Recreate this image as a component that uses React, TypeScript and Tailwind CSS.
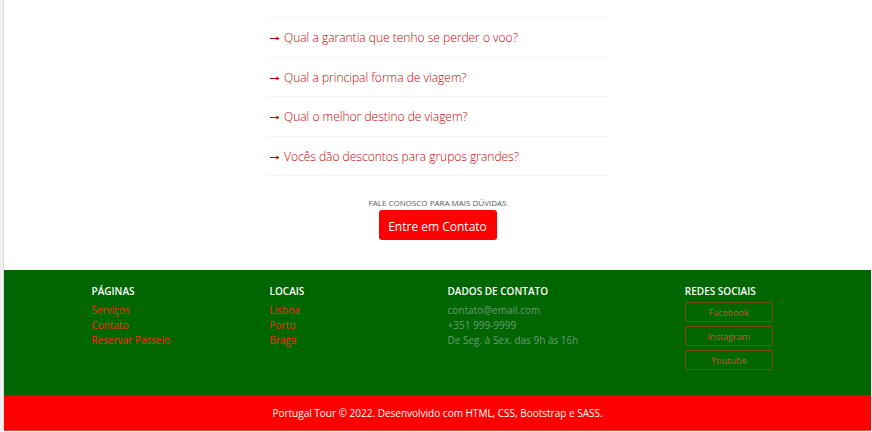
const questions = [
  'Qual a garantia que tenho se perder o voo?',
  'Qual a principal forma de viagem?',
  'Qual o melhor destino de viagem?',
  'Vocês dão descontos para grupos grandes?',
];

const pages = ['Serviços', 'Contato', 'Reservar Passeio'];
const places = ['Lisboa', 'Porto', 'Braga'];
const networks = ['Facebook', 'Instagram', 'Youtube'];

function Heading({ children }: { children: string }) {
  return <h2 className="text-[10px] leading-[15px] font-semibold whitespace-nowrap text-white">{children}</h2>;
}

function LinkColumn({ title, items }: { title: string; items: string[] }) {
  return (
    <nav aria-label={title} className="col-span-3 pl-[10px]">
      <Heading>{title}</Heading>
      <ul className="mt-1 text-[10px] leading-[15px] text-[#ff2a00]">
        {items.map((item) => (
          <li key={item}>
            <a href="#">{item}</a>
          </li>
        ))}
      </ul>
    </nav>
  );
}

export default function App() {
  return (
    <div className="border-l-[3px] border-[#f0f0f0] bg-white font-['Open_Sans','Noto_Sans',sans-serif]">
      <div className="mr-px border-l border-[#dcdcdc]">
        <main className="flex flex-col items-center pt-[17px] pb-[30px]">
          <ul className="grid h-[159px] w-full max-w-[339px] auto-rows-fr border-t border-[#f3f3f3]">
            {questions.map((question) => (
              <li key={question} className="flex items-center border-b border-[#f3f3f3] pt-0.5">
                <button type="button" className="flex items-center gap-1 pl-0.5 text-xs font-light text-[#c80000]">
                  <svg aria-hidden="true" viewBox="0 0 10 8" className="h-2 w-[10px] fill-none stroke-current">
                    <path d="M0 4.5h8.5" />
                    <path d="M6.5 2.5v4l3-2z" className="fill-current stroke-none" />
                  </svg>
                  {question}
                </button>
              </li>
            ))}
          </ul>
          <p className="mt-[19px] text-[8px] leading-[15px] text-[#555b60]">FALE CONOSCO PARA MAIS DÚVIDAS</p>
          <button type="button" className="h-[30px] w-[118px] rounded-[3px] bg-[#ff0000] pt-1 text-xs text-white">
            Entre em Contato
          </button>
        </main>
        <footer>
          <div className="bg-[#006600] pt-[14px] pb-[25px]">
            <div className="mx-auto grid max-w-[712px] grid-cols-12">
              <LinkColumn title="PÁGINAS" items={pages} />
              <LinkColumn title="LOCAIS" items={places} />
              <section className="col-span-4 pl-[10px]">
                <Heading>DADOS DE CONTATO</Heading>
                <address className="mt-1 text-[10px] leading-[15px] text-[#6c9b78] not-italic">
                  contato@email.com
                  <br />
                  +351 999-9999
                  <br />
                  De Seg. à Sex. das 9h às 16h
                </address>
              </section>
              <section className="col-span-2 pl-[10px]">
                <Heading>REDES SOCIAIS</Heading>
                <ul className="mt-[3px] flex w-[88px] flex-col gap-1">
                  {networks.map((network) => (
                    <li key={network}>
                      <a
                        href="#"
                        className="flex h-5 items-center justify-center rounded-[2px] border border-[#7a4a10] pt-0.5 text-[9px] text-[#dc4a28]"
                      >
                        {network}
                      </a>
                    </li>
                  ))}
                </ul>
              </section>
            </div>
          </div>
          <div className="border-y border-t-[#a02800] border-b-[#e05040] bg-[#ff0000] pt-[10px] pb-[9px] text-center text-[10px] leading-[15px] text-white">
            Portugal Tour © 2022. Desenvolvido com HTML, CSS, Bootstrap e SASS.
          </div>
        </footer>
      </div>
    </div>
  );
}
